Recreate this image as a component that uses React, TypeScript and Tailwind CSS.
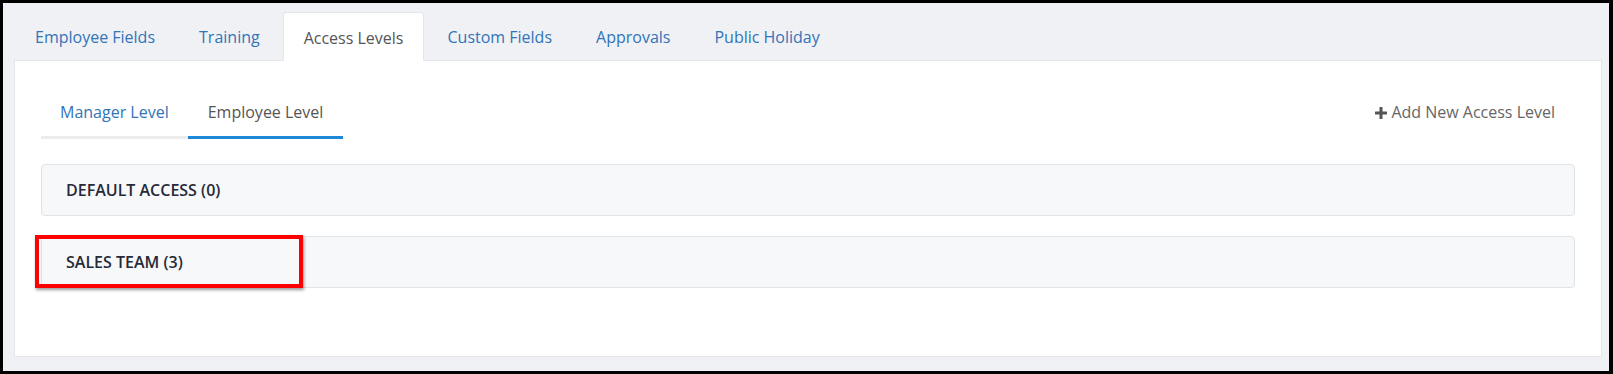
const tabs = [
  { label: "Employee Fields", active: false },
  { label: "Training", active: false },
  { label: "Access Levels", active: true },
  { label: "Custom Fields", active: false },
  { label: "Approvals", active: false },
  { label: "Public Holiday", active: false },
];

const levels = [
  { name: "DEFAULT ACCESS", count: 0, marked: false },
  { name: "SALES TEAM", count: 3, marked: true },
];

const App = () => {
  return (
    <div className="w-[1613px] h-[374px] bg-black pt-[3px] pl-[3px] pr-[4px] pb-[3px] font-['Open_Sans',sans-serif]">
      <div className="h-full bg-[#f0f1f5] pt-[9px] pl-[11px] pr-[7px] pb-[14px] flex flex-col">
        {/* top tabs */}
        <ul className="flex relative z-10">
          {tabs.map((t) => (
            <li
              key={t.label}
              className={
                t.active
                  ? "h-[49px] -mb-px px-5 pt-[2px] mr-[2px] flex items-center text-[16px] text-[#555] bg-white border border-[#e3e5ea] border-b-white rounded-t"
                  : "h-[48px] px-5 pt-[2px] mr-[2px] flex items-center text-[16px] text-[#3274b8] border border-transparent"
              }
            >
              {t.label}
            </li>
          ))}
        </ul>

        <div className="flex-1 bg-white border border-[#e3e5ea] pt-[30px] px-[26px]">
          {/* level tabs */}
          <div className="flex items-start justify-between">
            <div className="flex">
              <div className="px-[19px] pt-[11px] pb-[13px] leading-[21px] text-[16px] text-[#3274b8] border-b-[3px] border-[#ececec]">
                Manager Level
              </div>
              <div className="px-5 pt-[11px] pb-[13px] leading-[21px] text-[16px] text-[#555] border-b-[3px] border-[#1e88d8]">
                Employee Level
              </div>
            </div>
            <button className="flex items-center gap-[4px] pt-[11px] pr-[20px] leading-[21px] text-[16px] text-[#666]">
              <svg width="12" height="12" viewBox="0 0 12 12" fill="#555">
                <rect x="4.5" y="0" width="3" height="12" rx="0.5" />
                <rect x="0" y="4.5" width="12" height="3" rx="0.5" />
              </svg>
              Add New Access Level
            </button>
          </div>

          {/* access level panels */}
          <div className="mt-[25px] flex flex-col gap-[20px]">
            {levels.map((l) => (
              <div
                key={l.name}
                className="relative h-[52px] flex items-center px-6 bg-[#f7f8fa] border border-[#e0e3e8] rounded"
              >
                <span className="text-[16px] font-semibold text-[#262a38]">
                  {l.name} ({l.count})
                </span>
                {l.marked && (
                  <div className="absolute -left-[7px] -top-[2px] w-[268px] h-[53px] border-4 border-[#ff0000] shadow-[1px_2px_3px_rgba(0,0,0,0.4)]" />
                )}
              </div>
            ))}
          </div>
        </div>
      </div>
    </div>
  );
};

export default App;
